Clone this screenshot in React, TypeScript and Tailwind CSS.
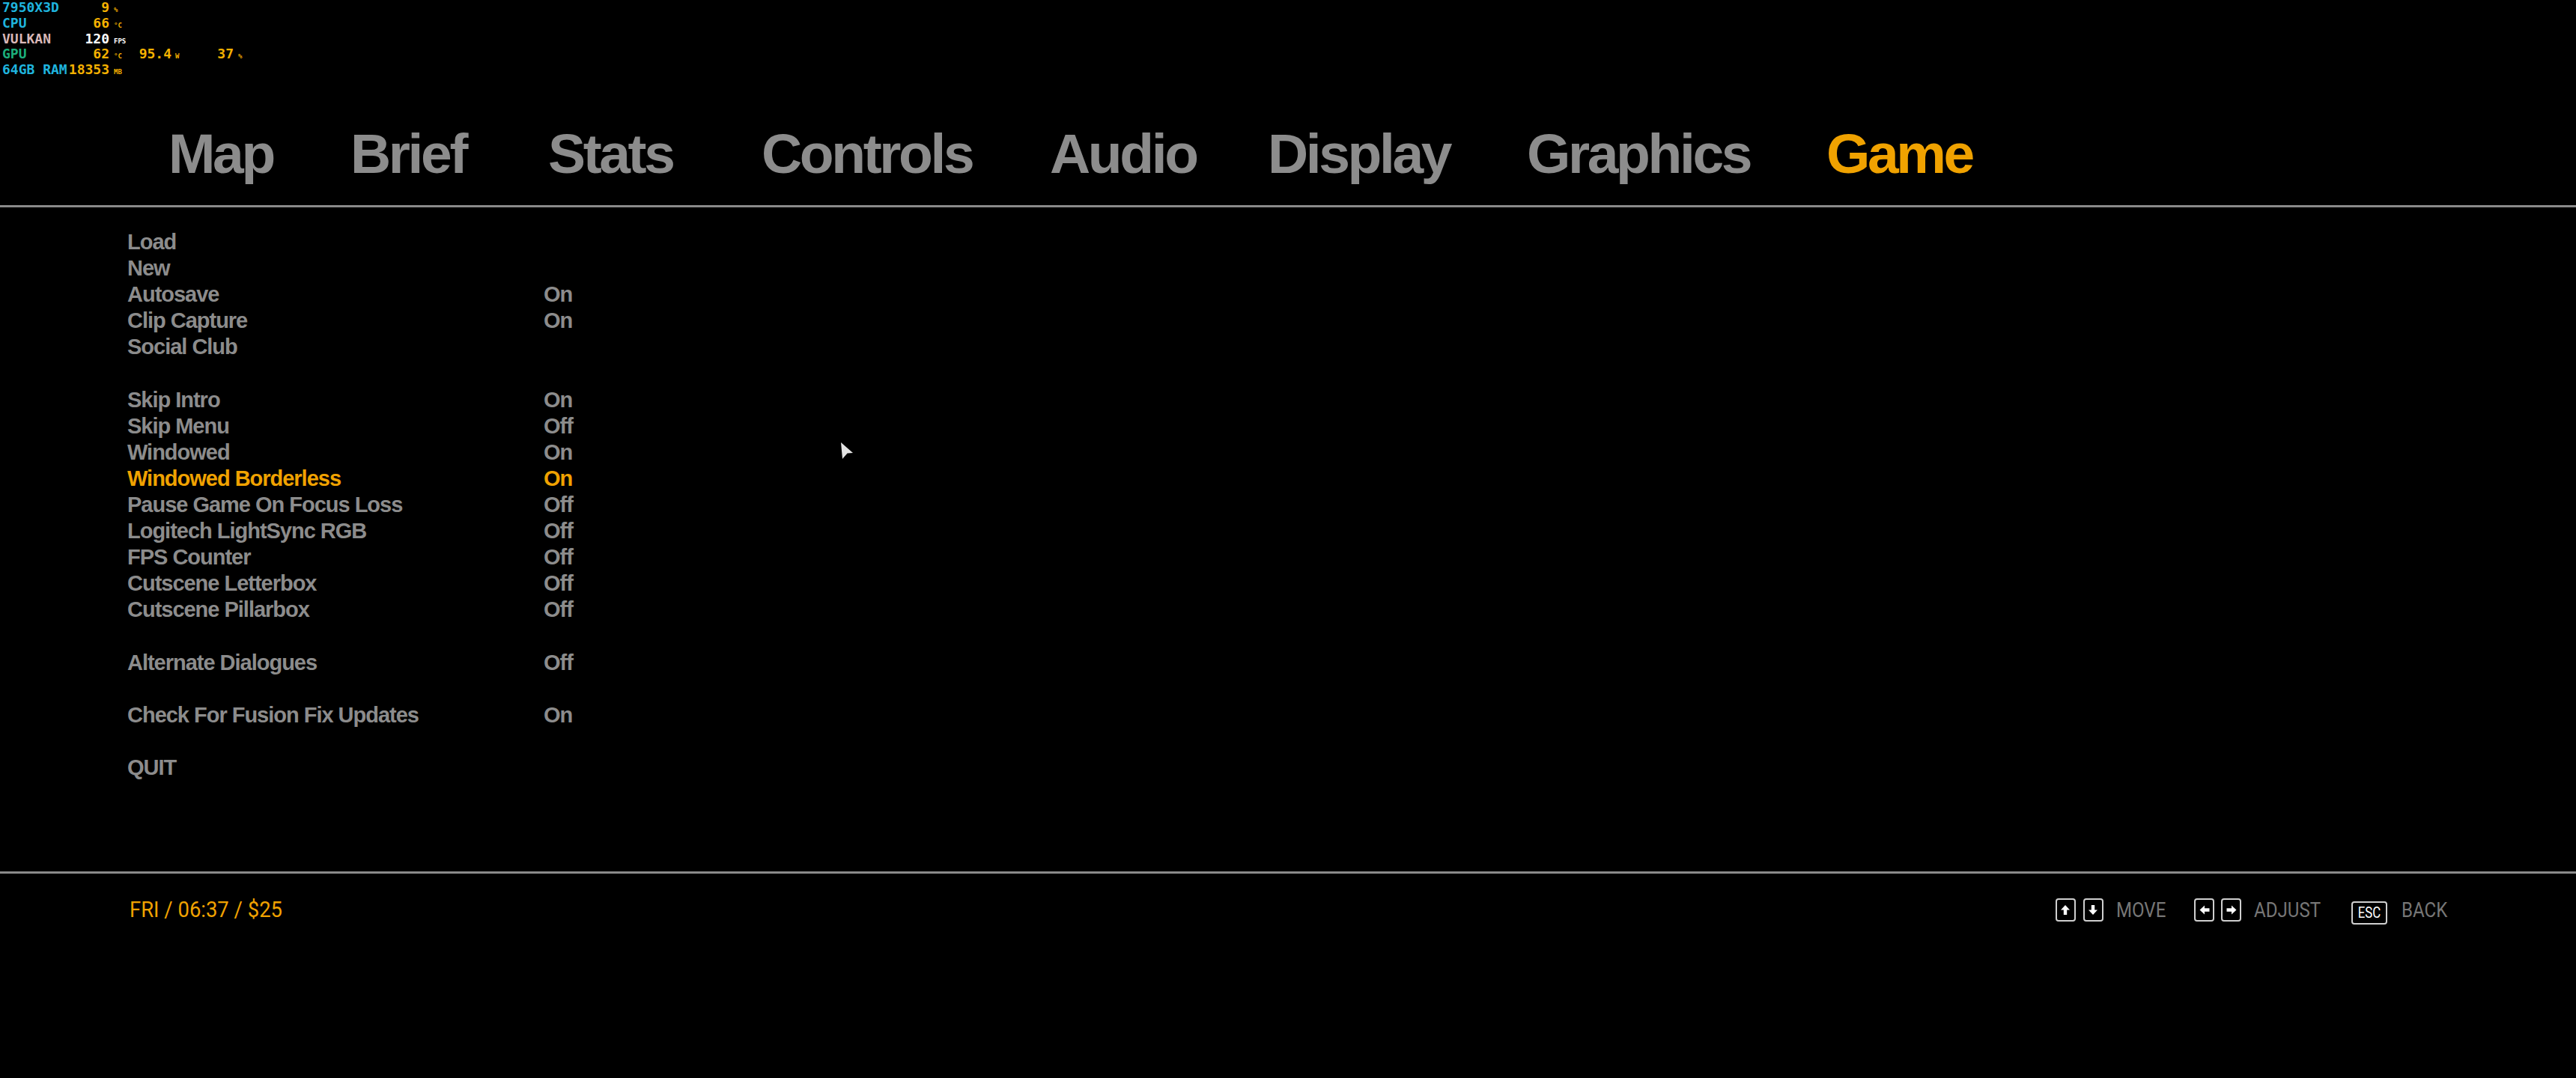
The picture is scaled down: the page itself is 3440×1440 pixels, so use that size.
import React from "react";

// each tab sits in its own slot, text left aligned
const tabs = [
  { name: "Map", slot: "w-[243px]" },
  { name: "Brief", slot: "w-[264px]" },
  { name: "Stats", slot: "w-[285px]" },
  { name: "Controls", slot: "w-[385px]" },
  { name: "Audio", slot: "w-[291px]" },
  { name: "Display", slot: "w-[346px]" },
  { name: "Graphics", slot: "w-[400px]" },
  { name: "Game", slot: "w-[200px]" },
];

type Row = { label: string; value?: string; active?: boolean } | null;

const rows: Row[] = [
  { label: "Load" },
  { label: "New" },
  { label: "Autosave", value: "On" },
  { label: "Clip Capture", value: "On" },
  { label: "Social Club" },
  null,
  { label: "Skip Intro", value: "On" },
  { label: "Skip Menu", value: "Off" },
  { label: "Windowed", value: "On" },
  { label: "Windowed Borderless", value: "On", active: true },
  { label: "Pause Game On Focus Loss", value: "Off" },
  { label: "Logitech LightSync RGB", value: "Off" },
  { label: "FPS Counter", value: "Off" },
  { label: "Cutscene Letterbox", value: "Off" },
  { label: "Cutscene Pillarbox", value: "Off" },
  null,
  { label: "Alternate Dialogues", value: "Off" },
  null,
  { label: "Check For Fusion Fix Updates", value: "On" },
  null,
  { label: "QUIT" },
];

const Unit = ({ children, color }: { children: React.ReactNode; color: string }) => (
  <span className={`text-[9px] leading-none mt-[4px] ${color}`}>{children}</span>
);

// RTSS style overlay in the corner
const Overlay = () => {
  const orange = "text-[#f4b100]";
  return (
    <div
      className="absolute top-0 left-0 pl-[3px] font-bold text-[18px] leading-[20.75px]"
      style={{ fontFamily: '"DejaVu Sans Mono", monospace' }}
    >
      <div className="flex items-start">
        <div className="w-[143px] flex justify-between">
          <span className="text-[#1fb4de]">7950X3D</span>
          <span className={orange}>9</span>
        </div>
        <div className="pl-[6px]"><Unit color={orange}>%</Unit></div>
      </div>
      <div className="flex items-start">
        <div className="w-[143px] flex justify-between">
          <span className="text-[#1fb4de]">CPU</span>
          <span className={orange}>66</span>
        </div>
        <div className="pl-[6px]"><Unit color={orange}>°C</Unit></div>
      </div>
      <div className="flex items-start">
        <div className="w-[143px] flex justify-between">
          <span className="text-[#d9b8b8]">VULKAN</span>
          <span className="text-white">120</span>
        </div>
        <div className="pl-[6px]"><Unit color="text-white">FPS</Unit></div>
      </div>
      <div className="flex items-start">
        <div className="w-[143px] flex justify-between">
          <span className="text-[#1caf7c]">GPU</span>
          <span className={orange}>62</span>
        </div>
        <div className="pl-[6px] w-[24px]"><Unit color={orange}>°C</Unit></div>
        <div className={`w-[59px] text-right ${orange}`}>95.4</div>
        <div className="pl-[5px] w-[30px]"><Unit color={orange}>W</Unit></div>
        <div className={`w-[53px] text-right ${orange}`}>37</div>
        <div className="pl-[6px]"><Unit color={orange}>%</Unit></div>
      </div>
      <div className="flex items-start">
        <div className="w-[143px] flex justify-between">
          <span className="text-[#1fb4de]">64GB RAM</span>
          <span className={orange}>18353</span>
        </div>
        <div className="pl-[6px]"><Unit color={orange}>MB</Unit></div>
      </div>
    </div>
  );
};

const Key = ({ children, wide }: { children: React.ReactNode; wide?: boolean }) => (
  <div
    className={`flex items-center justify-center border-2 border-[#cfcfcf] rounded-[4px] h-[31px] ${
      wide ? "w-[48px] mt-[8px]" : "w-[27px]"
    }`}
  >
    {children}
  </div>
);

const Arrow = ({ rotate }: { rotate: number }) => (
  <svg width="14" height="15" viewBox="0 0 14 15" style={{ transform: `rotate(${rotate}deg)` }}>
    <path d="M7 1 L13 7.5 L9.2 7.5 L9.2 14 L4.8 14 L4.8 7.5 L1 7.5 Z" fill="#ffffff" />
  </svg>
);

const HintLabel = ({ children, mr }: { children: string; mr: string }) => (
  <span className={`inline-block origin-left scale-x-[0.86] text-[28px] leading-none text-[#767676] ${mr}`}>
    {children}
  </span>
);

export default function App() {
  return (
    <div
      className="relative w-[3440px] h-[1440px] bg-black overflow-hidden"
      style={{ fontFamily: '"Liberation Sans", Arial, sans-serif' }}
    >
      <Overlay />

      {/* tabs */}
      <div className="pt-[168px] pl-[225px] flex h-[274px]">
        {tabs.map((t) => (
          <div key={t.name} className={t.slot}>
            <span
              className={`font-bold text-[75px] leading-[75px] tracking-[-0.045em] ${
                t.name === "Game" ? "text-[#f0a200]" : "text-[#8c8c8c]"
              }`}
            >
              {t.name}
            </span>
          </div>
        ))}
      </div>
      <div className="h-[3px] bg-[#8a8a8a]" />

      {/* menu list */}
      <div className="h-[887px] pt-[29px] pl-[170px]">
        {rows.map((r, i) =>
          r ? (
            <div
              key={i}
              className={`flex font-bold text-[29px] leading-[35.1px] tracking-[-0.035em] ${
                r.active ? "text-[#f0a200]" : "text-[#8c8c8c]"
              }`}
            >
              <span className="w-[556px]">{r.label}</span>
              {r.value && <span>{r.value}</span>}
            </div>
          ) : (
            <div key={i} className="h-[35.1px]" />
          )
        )}
      </div>
      <div className="h-[3px] bg-[#8a8a8a]" />

      {/* footer */}
      <div
        className="flex items-center justify-between pt-[29px] pl-[173px] pr-[172px]"
        style={{ fontFamily: 'Roboto, "Liberation Sans", sans-serif' }}
      >
        <span className="inline-block origin-left scale-x-[0.93] text-[29.5px] leading-[31px] text-[#f0a200]">
          FRI / 06:37 / $25
        </span>
        <div className="flex items-center">
          <Key><Arrow rotate={0} /></Key>
          <div className="w-[10px]" />
          <Key><Arrow rotate={180} /></Key>
          <div className="w-[17px]" />
          <HintLabel mr="-mr-[11px]">MOVE</HintLabel>
          <div className="w-[38px]" />
          <Key><Arrow rotate={-90} /></Key>
          <div className="w-[9px]" />
          <Key><Arrow rotate={90} /></Key>
          <div className="w-[17px]" />
          <HintLabel mr="-mr-[14px]">ADJUST</HintLabel>
          <div className="w-[40px]" />
          <Key wide>
            <span className="inline-block scale-x-[0.8] text-[21px] leading-none text-white">ESC</span>
          </Key>
          <div className="w-[19px]" />
          <HintLabel mr="-mr-[10px]">BACK</HintLabel>
        </div>
      </div>

      {/* mouse pointer */}
      <svg className="absolute left-[1122px] top-[590px]" width="20" height="26" viewBox="0 0 20 26">
        <path d="M1 1 L17 15 L9.5 15.5 L3 23 Z" fill="#e4e4e4" />
      </svg>
    </div>
  );
}
